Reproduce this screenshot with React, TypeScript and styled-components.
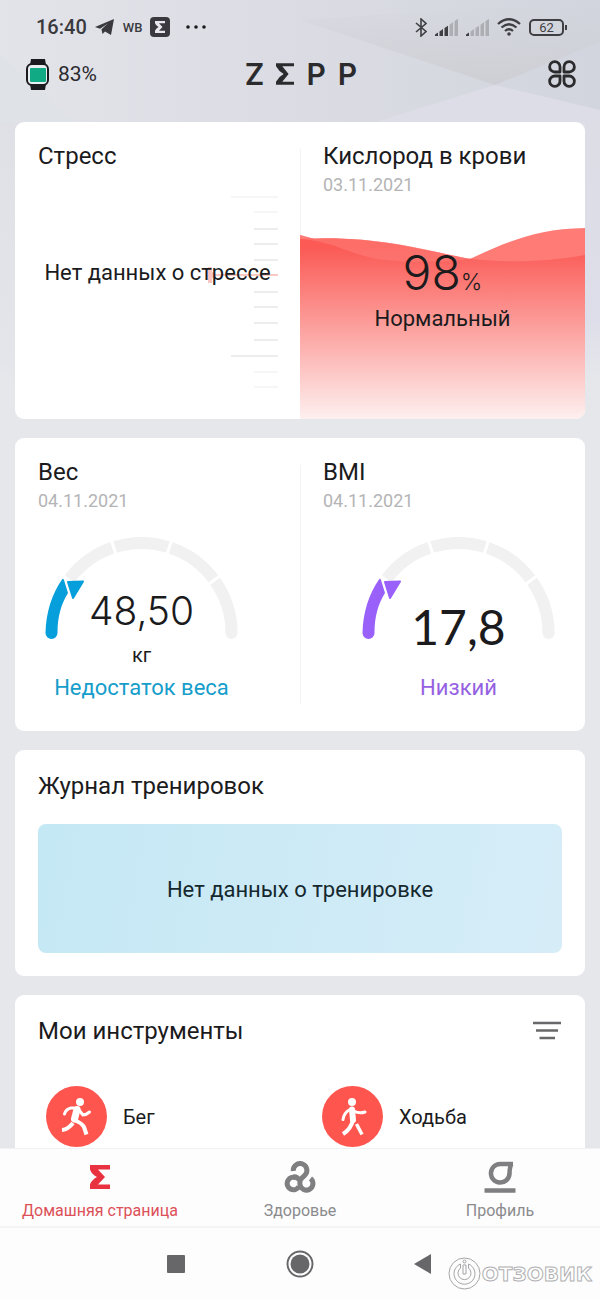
import React from "react";
import styled, { createGlobalStyle } from "styled-components";

const Global = createGlobalStyle`
  *, *::before, *::after { box-sizing: border-box; }
  body { margin: 0; background: #e6e7eb; font-family: Roboto, "Noto Sans", sans-serif; color: #1b1b1d; }
  button { border: 0; padding: 0; background: none; font: inherit; color: inherit; cursor: pointer; }
  h1, h2, p { margin: 0; font-weight: 400; }
  svg { display: block; flex: none; }
`;

const Screen = styled.div`
  position: relative;
  height: 100vh;
  display: flex;
  flex-direction: column;
  overflow: hidden;
  background: linear-gradient(#dddee5, #e4e5ea 360px, #e6e7eb 380px);
`;

const Backdrop = styled.svg`
  position: absolute;
  inset: 0 0 auto 0;
  width: 100%;
  height: 370px;
`;

const StatusBar = styled.div`
  position: relative;
  display: flex;
  align-items: center;
  justify-content: space-between;
  height: 52px;
  padding: 2px 33px 0 36px;
  color: #3a3a3e;
`;

const StatusGroup = styled.div`
  display: flex;
  align-items: center;
  gap: 8px;
`;

const Clock = styled.span`
  font-size: 20px;
  font-weight: 500;
`;

const Carrier = styled.span`
  font-size: 13px;
  font-weight: 500;
`;

const Header = styled.header`
  position: relative;
  display: grid;
  grid-template-columns: 1fr auto 1fr;
  align-items: center;
  height: 44px;
  padding: 0 24px 0 26px;
`;

const WatchStatus = styled.button`
  display: flex;
  align-items: center;
  gap: 8px;
  justify-self: start;
  font-size: 21px;
  color: #2b2b2e;
`;

const Brand = styled.h1`
  display: flex;
  align-items: center;
  gap: 12px;
  font-family: Inter, sans-serif;
  font-size: 30px;
  line-height: 36px;
  font-weight: 600;
  color: #2b2b2e;
`;

const IconButton = styled.button`
  justify-self: end;
`;

const Feed = styled.main`
  position: relative;
  flex: 1;
  min-height: 0;
  overflow: hidden;
  display: flex;
  flex-direction: column;
  gap: 19px;
  padding: 26px 15px 0;
`;

const Card = styled.section`
  flex: none;
  background: #fff;
  border-radius: 9px;
  overflow: hidden;
`;

const SplitCard = styled(Card)<{ $height: number }>`
  display: grid;
  grid-template-columns: 1fr 1fr;
  min-height: ${(p) => p.$height}px;
`;

const Half = styled.div<{ $divided?: boolean }>`
  position: relative;
  display: flex;
  flex-direction: column;
  padding-top: 19px;
  &::before {
    content: "";
    display: ${(p) => (p.$divided ? "block" : "none")};
    position: absolute;
    left: 0;
    top: 27px;
    bottom: 27px;
    width: 1px;
    background: #f4f4f5;
  }
`;

const Title = styled.h2`
  padding-left: 23px;
  font-size: 24px;
  line-height: 30px;
`;

const DateLine = styled.p`
  padding-left: 23px;
  font-size: 18px;
  line-height: 28px;
  color: #b4b4b6;
`;

const Overlay = styled.div`
  display: grid;
  flex: 1;
  > * { grid-area: 1 / 1; }
`;

const StressScale = styled.svg`
  justify-self: end;
  margin: 23px 22px 0 0;
`;

const StressText = styled.p`
  position: relative;
  justify-self: center;
  padding-top: 88px;
  font-size: 22px;
  line-height: 28px;
`;

const Wave = styled.svg`
  position: relative;
  width: 100%;
  height: 192px;
  align-self: end;
`;

const OxygenReading = styled.div`
  position: relative;
  display: flex;
  flex-direction: column;
  align-items: center;
  padding-top: 50px;
`;

const Value = styled.p<{ $size: number; $family?: string; $weight?: number }>`
  font-family: ${(p) => p.$family ?? "Inter"}, sans-serif;
  font-size: ${(p) => p.$size}px;
  line-height: 48px;
  font-weight: ${(p) => p.$weight ?? 300};
`;

const Percent = styled.span`
  font-size: 23px;
`;

const Caption = styled.p<{ $color?: string }>`
  font-size: 22px;
  line-height: 32px;
  color: ${(p) => p.$color ?? "inherit"};
`;

const OxygenCaption = styled(Caption)`
  line-height: 26px;
`;

const GaugeArea = styled(Overlay)<{ $side: "left" | "right" }>`
  flex: none;
  width: 193px;
  margin-top: 22px;
  margin-left: ${(p) => (p.$side === "left" ? 30 : 62)}px;
`;

const GaugeReading = styled.div<{ $top: number }>`
  position: relative;
  display: flex;
  flex-direction: column;
  align-items: center;
  height: 135px;
  padding-top: ${(p) => p.$top}px;
`;

const Unit = styled.p`
  margin-top: 4px;
  font-size: 20px;
  line-height: 32px;
`;

const GaugeBlock = styled.div`
  display: flex;
  flex-direction: column;
  align-items: center;
`;

const WorkoutCard = styled(Card)`
  padding: 21px 23px 23px;
  ${Title} { padding-left: 0; }
`;

const EmptyWorkout = styled.div`
  display: flex;
  align-items: center;
  justify-content: center;
  height: 129px;
  margin-top: 23px;
  padding-top: 2px;
  border-radius: 8px;
  font-size: 22px;
  color: #15282e;
  background: linear-gradient(100deg, #c4e8f4, #d6edf8);
`;

const ToolsCard = styled(Card)`
  padding: 21px 24px 60px 0;
`;

const ToolsHead = styled.div`
  display: flex;
  align-items: center;
  justify-content: space-between;
`;

const ToolGrid = styled.div`
  display: grid;
  grid-template-columns: 276px 1fr;
  padding: 40px 0 0 31px;
`;

const Tool = styled.button`
  display: flex;
  align-items: center;
  gap: 16px;
  font-size: 20px;
`;

const TabBar = styled.nav`
  position: relative;
  display: grid;
  grid-template-columns: repeat(3, 1fr);
  height: 80px;
  background: #fdfdfe;
  border-top: 1px solid #f1f1f3;
  border-bottom: 2px solid #f4f4f5;
`;

const Tab = styled.a<{ $active?: boolean }>`
  display: flex;
  flex-direction: column;
  align-items: center;
  gap: 8px;
  padding-top: 12px;
  font-size: 16px;
  line-height: 20px;
  text-decoration: none;
  color: ${(p) => (p.$active ? "#dc5057" : "#8b8b8d")};
`;

const SystemBar = styled.div`
  position: relative;
  display: flex;
  align-items: center;
  justify-content: center;
  gap: 96px;
  height: 72px;
  background: #fdfdfe;
`;

const Watermark = styled.div`
  position: absolute;
  right: 8px;
  bottom: 10px;
  display: flex;
  align-items: center;
  gap: 1px;
  font-family: "DejaVu Sans", sans-serif;
  font-size: 20px;
  font-weight: 700;
  line-height: 32px;
  color: #fff;
  -webkit-text-stroke: 1px #b0b0b2;
`;

const sigma = "M0 0H20V4.5H8L15 12L8 19.5H20V24H0V19.5Q1.5 15 7 12Q1.5 9 0 4.5Z";

function Signal({ strong }: { strong: number }) {
  return (
    <svg width="23" height="17" viewBox="0 0 23 17">
      {[0, 1, 2, 3, 4].map((i) => {
        const x = i === 0 ? 0 : i * 5 - 0.5;
        const right = i * 5 + 3;
        return (
          <path
            key={i}
            d={`M${x} 17V${15.5 - x * 0.68}L${right} ${15.5 - right * 0.68}V17Z`}
            fill={i < strong ? "#3f3f43" : "#adaeb3"}
          />
        );
      })}
    </svg>
  );
}

function Gauge({ color }: { color: string }) {
  const point = (deg: number, r = 90) => {
    const a = (deg * Math.PI) / 180;
    return `${96.5 + r * Math.cos(a)} ${96 - r * Math.sin(a)}`;
  };
  return (
    <svg width="193" height="103" viewBox="0 0 193 103" fill="none">
      <path d={`M${point(143)}A90 90 0 0 1 ${point(0)}`} stroke="#f1f1f2" strokeWidth="12" />
      <circle cx="186.5" cy="96" r="6" fill="#f1f1f2" />
      {[108, 72, 36].map((d) => (
        <path key={d} d={`M${point(d, 82)}L${point(d, 98)}`} stroke="#fff" strokeWidth="3" />
      ))}
      <path d="M0.500 96C1 75 7 57 17 42.500Q18 41 19 43L23 56C16 67 12.500 80 12.500 96A6 6 0 0 1 .5 96Z" fill={color} />
      <path d="M23 45L38 44.500L28 61Z" fill={color} stroke={color} strokeWidth="2" strokeLinejoin="round" />
    </svg>
  );
}

function Runner() {
  return (
    <svg width="61" height="61" viewBox="0 0 61 61" fill="none" stroke="#fff" strokeLinecap="round" strokeLinejoin="round">
      <circle cx="30.500" cy="30.500" r="30.500" fill="#ff554f" stroke="none" />
      <circle cx="34" cy="16" r="4" fill="#fff" stroke="none" />
      <path d="M18.500 28Q20 23 25 22L31 22" strokeWidth="3" />
      <path d="M31 23.500L28.500 33" strokeWidth="7" />
      <path d="M33 24L37 29Q40 29 43.500 26" strokeWidth="3" />
      <path d="M28 34Q36 37 38 41L40.500 48.500" strokeWidth="4" strokeLinecap="butt" />
      <path d="M27 37Q22 43.500 16 44" strokeWidth="4" strokeLinecap="butt" />
    </svg>
  );
}

function Walker() {
  return (
    <svg width="61" height="61" viewBox="0 0 61 61" fill="none" stroke="#fff" strokeLinecap="round" strokeLinejoin="round">
      <circle cx="30.500" cy="30.500" r="30.500" fill="#ff554f" stroke="none" />
      <circle cx="30" cy="16" r="4" fill="#fff" stroke="none" />
      <path d="M30 23.500L31 34" strokeWidth="6" />
      <path d="M27 24Q22 27 21 33.500" strokeWidth="3" />
      <path d="M32 25Q37 28 43 26" strokeWidth="3" />
      <path d="M31 34Q29 43 21 48" strokeWidth="4" strokeLinecap="butt" />
      <path d="M34.500 38L40 48.500" strokeWidth="3.500" strokeLinecap="butt" />
    </svg>
  );
}

export default function App() {
  return (
    <Screen>
      <Global />
      <Backdrop viewBox="0 0 600 370" preserveAspectRatio="none" aria-hidden="true">
        <defs>
          <linearGradient id="sky" x1="0" y1="0" x2="1" y2="0">
            <stop offset="0" stopColor="#e3e4ea" />
            <stop offset=".5" stopColor="#dbdce3" />
            <stop offset="1" stopColor="#d2d5de" />
          </linearGradient>
          <linearGradient id="facet" x1="0" y1="0" x2="0" y2="1">
            <stop offset="0" stopColor="#d0d1d7" stopOpacity="0" />
            <stop offset="1" stopColor="#cecfd4" />
          </linearGradient>
          <linearGradient id="edge" x1="0" y1="0" x2="0" y2="1">
            <stop offset="0" stopColor="#dcdde5" />
            <stop offset=".8" stopColor="#dedeea" />
            <stop offset="1" stopColor="#e5e6eb" />
          </linearGradient>
        </defs>
        <path d="M0 0H600V122H0Z" fill="url(#sky)" />
        <path d="M300 20L600 0V42L495 85Z" fill="url(#facet)" />
        <path d="M375 122L495 85L600 110V122Z" fill="#dcdde6" />
        <path d="M0 55L75 122H0Z" fill="#dfe2e7" />
        <path d="M585 122H600V370H585Z" fill="url(#edge)" />
      </Backdrop>

      <StatusBar>
        <StatusGroup>
          <Clock>16:40</Clock>
          <svg width="20" height="17" viewBox="0 0 20 17" fill="#3a3a3e">
            <path d="M0 8L19 0L16 16L10 12.500L7.500 15L6.500 10.500L13 4.500L5 9.800Z" />
            <path d="M6.500 10.500L13 4.500L9 11.500Z" />
          </svg>
          <Carrier>WB</Carrier>
          <svg width="20" height="20" viewBox="0 0 20 20">
            <rect width="20" height="20" rx="4" fill="#3a3a3e" />
            <path d={sigma} fill="#e8e8ec" transform="translate(5 4) scale(.5)" />
          </svg>
          <svg width="36" height="4" viewBox="0 0 36 4" fill="#1b1b1d">
            <circle cx="10" cy="2" r="1.800" />
            <circle cx="18" cy="2" r="1.800" />
            <circle cx="26" cy="2" r="1.800" />
          </svg>
        </StatusGroup>
        <StatusGroup>
          <svg width="12" height="19" viewBox="0 0 12 19" fill="none" stroke="#3f3f43" strokeWidth="1.600">
            <path d="M1 5L11 13.500L6 18V1L11 5.500L1 14" />
          </svg>
          <Signal strong={3} />
          <Signal strong={1} />
          <svg width="24" height="18" viewBox="0 0 24 18" fill="none" stroke="#3f3f43" strokeWidth="2.200">
            <path d="M1 6Q12 -3.500 23 6M4.500 9.500Q12 3 19.500 9.500M8 13Q12 9.500 16 13" />
            <circle cx="12" cy="16" r="1.800" fill="#3f3f43" stroke="none" />
          </svg>
          <svg width="38" height="17" viewBox="0 0 38 17">
            <rect x="1" y="1" width="33" height="15" rx="4" fill="none" stroke="#3f3f43" strokeWidth="2" />
            <rect x="36" y="6" width="2" height="5" fill="#3f3f43" />
            <text x="17.500" y="13" textAnchor="middle" fontSize="13" fontFamily="Roboto" fill="#3f3f43">62</text>
          </svg>
        </StatusGroup>
      </StatusBar>

      <Header>
        <WatchStatus>
          <svg width="24" height="31" viewBox="0 0 24 31">
            <path d="M5 0H19L20 6H4ZM4 25H20L19 31H5Z" fill="#1b1b1f" />
            <rect x="1" y="5" width="21" height="21" rx="5" fill="#e9eef0" stroke="#1b1b1f" strokeWidth="2" />
            <rect x="4" y="9" width="16" height="14" rx="1" fill="#10aa84" />
          </svg>
          83%
        </WatchStatus>
        <Brand aria-label="Zepp">
          <span>Z</span>
          <svg width="18" height="22" viewBox="0 0 20 24">
            <path d="M0 0H20V3.500H7L14 12L7 20.500H20V24H0V20.500Q3 15 8.500 12Q3 9 0 3.500Z" fill="#2b2b2e" />
          </svg>
          <span>P</span>
          <span>P</span>
        </Brand>
        <IconButton aria-label="Меню">
          <svg width="28" height="28" viewBox="0 0 28 28" fill="none" stroke="#2b2b2e" strokeWidth="2.800" strokeLinejoin="round">
            <path d="M12 12H7A5.200 5.200 0 1 1 12 7ZM16 12V7A5.200 5.200 0 1 1 21 12ZM12 16V21A5.200 5.200 0 1 1 7 16ZM16 16H21A5.200 5.200 0 1 1 16 21Z" />
          </svg>
        </IconButton>
      </Header>

      <Feed>
        <SplitCard $height={297}>
          <Half>
            <Title>Стресс</Title>
            <Overlay>
              <StressScale width="70" height="196" viewBox="0 0 70 196">
                {[2, 17, 34, 49, 65, 97, 112, 128, 145, 161, 177, 192].map((y, i) => (
                  <rect key={y} x={i === 0 || i === 9 ? 23 : 46} y={y} width={i === 0 || i === 9 ? 47 : 24} height="2" fill={i < 2 || i > 9 ? "#f6f6f7" : "#ededee"} />
                ))}
                <rect x="6" y="80" width="64" height="2" fill="#f9c9c3" />
                <path d="M0 73H4V78L8 80V83L4 84V89H0Z" fill="#fbc5c1" />
              </StressScale>
              <StressText>Нет данных о стрессе</StressText>
            </Overlay>
          </Half>
          <Half $divided>
            <Title>Кислород в крови</Title>
            <DateLine>03.11.2021</DateLine>
            <Overlay>
              <Wave viewBox="0 0 285 192" preserveAspectRatio="none">
                <defs>
                  <linearGradient id="oxygen" x1="0" y1="0" x2="0" y2="1">
                    <stop offset="0.050" stopColor="#fb5a55" />
                    <stop offset="1" stopColor="#fdf0ef" />
                  </linearGradient>
                </defs>
                <path d="M0 8Q45 20 85 34H165C210 14 235 2 285 1V40H0Z" fill="#ff7b76" />
                <path d="M0 12C70 8 115 21 165 31C205 37 255 34 285 28V192H0Z" fill="url(#oxygen)" />
                <path d="M0 8L15 12C70 9 115 20 165 31V33Q120 36 85 33C50 29 35 14 0 12Z" fill="#ff7b76" opacity=".6" />
              </Wave>
              <OxygenReading>
                <Value $size={48}>98<Percent>%</Percent></Value>
                <OxygenCaption>Нормальный</OxygenCaption>
              </OxygenReading>
            </Overlay>
          </Half>
        </SplitCard>

        <SplitCard $height={293}>
          <Half>
            <Title>Вес</Title>
            <DateLine>04.11.2021</DateLine>
            <GaugeArea $side="left">
              <Gauge color="#069fdc" />
              <GaugeBlock>
                <GaugeReading $top={50}>
                  <Value $size={39}>48,50</Value>
                  <Unit>кг</Unit>
                </GaugeReading>
                <Caption $color="#159dcb">Недостаток веса</Caption>
              </GaugeBlock>
            </GaugeArea>
          </Half>
          <Half $divided>
            <Title>BMI</Title>
            <DateLine>04.11.2021</DateLine>
            <GaugeArea $side="right">
              <Gauge color="#9a60fa" />
              <GaugeBlock>
                <GaugeReading $top={66}>
                  <Value $size={48} $family="Lato" $weight={400}>17,8</Value>
                </GaugeReading>
                <Caption $color="#9561e2">Низкий</Caption>
              </GaugeBlock>
            </GaugeArea>
          </Half>
        </SplitCard>

        <WorkoutCard>
          <Title>Журнал тренировок</Title>
          <EmptyWorkout>Нет данных о тренировке</EmptyWorkout>
        </WorkoutCard>

        <ToolsCard>
          <ToolsHead>
            <Title>Мои инструменты</Title>
            <IconButton aria-label="Фильтр">
              <svg width="28" height="20" viewBox="0 0 28 20" stroke="#68686a" strokeWidth="2.400">
                <path d="M0 2H28M3 9.500H25M6.500 17H22" />
              </svg>
            </IconButton>
          </ToolsHead>
          <ToolGrid>
            <Tool><Runner />Бег</Tool>
            <Tool><Walker />Ходьба</Tool>
          </ToolGrid>
        </ToolsCard>
      </Feed>

      <TabBar>
        <Tab href="#home" $active>
          <svg width="32" height="32" viewBox="0 0 32 32">
            <path d={sigma} fill="#e9323f" transform="translate(6 4)" />
          </svg>
          Домашняя страница
        </Tab>
        <Tab href="#health">
          <svg width="32" height="32" viewBox="0 0 32 32" fill="none" stroke="#7f7f81" strokeWidth="5">
            <path d="M9.300 10A6.800 6.800 0 1 1 20.500 14.500L17 18Q15.500 20 16 23.500A6.500 6.500 0 1 0 26.500 17.500" />
            <path d="M12.500 17A6.300 6.300 0 1 0 15 25.500" />
            <path d="M9.500 15.700Q13.500 15.500 15.500 19.500" />
          </svg>
          Здоровье
        </Tab>
        <Tab href="#profile">
          <svg width="32" height="32" viewBox="0 0 32 32" fill="none" stroke="#7f7f81" strokeWidth="4.500">
            <path d="M29 3H16A9.300 9.300 0 1 0 25.500 13Q25.500 6 27.500 3" />
            <path d="M0.500 29.500H31.500" />
          </svg>
          Профиль
        </Tab>
      </TabBar>

      <SystemBar>
        <IconButton aria-label="Недавние">
          <svg width="28" height="28" viewBox="0 0 28 28"><rect x="5" y="5" width="18" height="18" rx="1" fill="#676769" /></svg>
        </IconButton>
        <IconButton aria-label="Домой">
          <svg width="28" height="28" viewBox="0 0 28 28">
            <circle cx="14" cy="14" r="12.500" fill="none" stroke="#676769" strokeWidth="2" />
            <circle cx="14" cy="14" r="9.500" fill="#676769" />
          </svg>
        </IconButton>
        <IconButton aria-label="Назад">
          <svg width="28" height="28" viewBox="0 0 28 28"><path d="M4 14L21 4V24Z" fill="#676769" /></svg>
        </IconButton>
        <Watermark>
          <svg width="33" height="33" viewBox="0 0 33 33" fill="none" stroke="#a5a5a7">
            <circle cx="16.500" cy="16.500" r="15.500" />
            <path d="M12.500 7A10.500 10.500 0 1 0 20.500 7V11A6.500 6.500 0 1 1 12.500 11Z" />
            <path d="M15 8H18V17H15Z" />
            <circle cx="16.500" cy="4.500" r="1.500" />
          </svg>
          <span>ОТЗОВИК</span>
        </Watermark>
      </SystemBar>
    </Screen>
  );
}
